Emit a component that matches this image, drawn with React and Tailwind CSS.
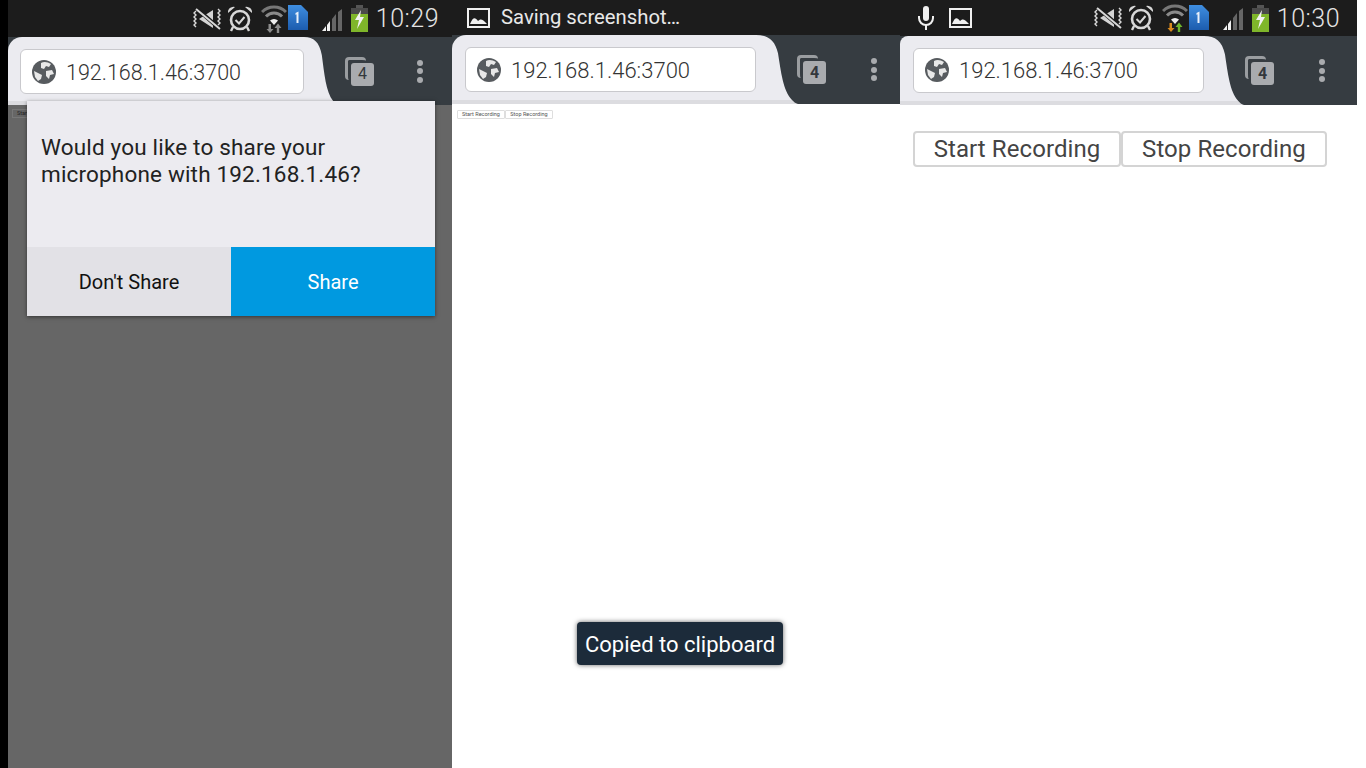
import React from 'react';

const font = { fontFamily: 'Roboto, "Liberation Sans", sans-serif' };

function MuteIcon() {
  return (
    <svg width="29" height="22" viewBox="0 0 29 22" className="shrink-0">
      <path d="M6 11 L20 2 V20 Z" fill="#d4d4d4" />
      <path d="M3 0 L27 21" stroke="#1c1c1c" strokeWidth="4" />
      <path d="M3 1 L27 21" stroke="#d8d8d8" strokeWidth="2" />
      <path d="M3 3 l-2 2 l2 2 l-2 2 l2 2 l-2 2 l2 2 l-2 2 l2 2" stroke="#d8d8d8" strokeWidth="1.4" fill="none" />
      <path d="M25 1 l2 2 l-2 2 l2 2 l-2 2 l2 2 l-2 2 l2 2 l-2 2" stroke="#d8d8d8" strokeWidth="1.4" fill="none" />
    </svg>
  );
}

function AlarmIcon() {
  return (
    <svg width="24" height="26" viewBox="0 0 24 26" className="shrink-0">
      <circle cx="12" cy="14" r="9" fill="none" stroke="#d8d8d8" strokeWidth="2.6" />
      <path d="M0 7 A5.5 5.5 0 0 1 7 1 Z M24 7 A5.5 5.5 0 0 0 17 1 Z" fill="#d8d8d8" />
      <path d="M7.5 14 L11 17.5 L16.5 11" fill="none" stroke="#d8d8d8" strokeWidth="2" />
      <path d="M5 21 L3 25 M19 21 L21 25" stroke="#d8d8d8" strokeWidth="2.4" />
    </svg>
  );
}

function WifiIcon({ down = '#8c8c8c', up = '#8c8c8c' }) {
  return (
    <svg width="26" height="28" viewBox="0 0 26 28" className="shrink-0">
      <path d="M1 7 A17 17 0 0 1 25 7" fill="none" stroke="#777" strokeWidth="3" />
      <path d="M5 11.5 A11 11 0 0 1 21 11.5" fill="none" stroke="#8a8a8a" strokeWidth="3" />
      <path d="M9 15.5 A6 6 0 0 1 17 15.5 L13 20 Z" fill="#ededed" />
      <path d="M9 19 L5.5 23 H8 V28 H10.5 V23 H12.5 Z" fill={down} transform="rotate(180 9 23.5)" />
      <path d="M17 18.5 L13.5 23 H15.8 V28 H18.2 V23 H20.5 Z" fill={up} />
    </svg>
  );
}

function SimIcon() {
  return (
    <svg width="20" height="25" viewBox="0 0 20 25" className="shrink-0">
      <defs>
        <linearGradient id="simFill" x1="0" y1="0" x2="0" y2="1">
          <stop offset="0" stopColor="#3f8ee0" />
          <stop offset="1" stopColor="#1c5cae" />
        </linearGradient>
      </defs>
      <path d="M0 0 H13 L20 7 V25 H0 Z" fill="url(#simFill)" />
      <path d="M7.5 8 L10.5 6.5 V18 H8.5 V9.3 L7.5 10 Z" fill="#e8f0fa" />
    </svg>
  );
}

function SignalIcon() {
  return (
    <svg width="22" height="22" viewBox="0 0 22 22" className="shrink-0">
      <path d="M0 22 L4 17 V22 Z" fill="#f0f0f0" />
      <path d="M5 16 L8 12 V22 H5 Z" fill="#f0f0f0" />
      <path d="M10 10 L14 5 V22 H10 Z" fill="#666" />
      <path d="M16 3 L20 0 V22 H16 Z" fill="#666" />
    </svg>
  );
}

function BatteryIcon() {
  return (
    <svg width="17" height="27" viewBox="0 0 17 27" className="shrink-0">
      <rect x="5" y="0" width="7" height="3" fill="#555" />
      <rect x="0" y="3" width="17" height="24" fill="#7fb62a" />
      <rect x="0" y="3" width="17" height="6" fill="#4a4a4a" />
      <path d="M10 5 L4 15 H8 L6 24 L13 12 H9 Z" fill="#f2f2f2" />
    </svg>
  );
}

function StatusIcons({ time, colored }) {
  return (
    <div className="flex items-center">
      <MuteIcon />
      <div className="ml-[6px]"><AlarmIcon /></div>
      <div className="ml-[9px]">
        {colored ? <WifiIcon down="#d98a1e" up="#6fb52c" /> : <WifiIcon />}
      </div>
      <div className="ml-[1px] mb-[2px]"><SimIcon /></div>
      <div className="ml-[14px] mt-[2px]"><SignalIcon /></div>
      <div className="ml-[7px]"><BatteryIcon /></div>
      <span className="ml-[8px] text-[25px] font-light tracking-[0.5px] text-[#e4e4e4] leading-none">{time}</span>
    </div>
  );
}

function ImageIcon() {
  return (
    <svg width="23" height="20" viewBox="0 0 23 20" className="shrink-0">
      <rect x="1" y="1" width="21" height="18" fill="none" stroke="#f0f0f0" strokeWidth="2" />
      <path d="M3 16 C6 9 8 9 11 13 C13 11 15 10 20 16 Z" fill="#f0f0f0" />
    </svg>
  );
}

function MicIcon() {
  return (
    <svg width="16" height="24" viewBox="0 0 16 24" className="shrink-0">
      <rect x="5" y="0" width="6" height="15" rx="3" fill="#f0f0f0" />
      <path d="M1 10 V12 A7 7 0 0 0 15 12 V10" fill="none" stroke="#f0f0f0" strokeWidth="2" />
      <rect x="7" y="18" width="2" height="6" fill="#f0f0f0" />
    </svg>
  );
}

function GlobeIcon() {
  return (
    <svg width="24" height="24" viewBox="0 0 24 24" className="shrink-0">
      <circle cx="12" cy="12" r="12" fill="#575b5f" />
      <path d="M9 3 C12 1 16 2 19 4 L17 7 L14 6 L12 9 L9 8 Z" fill="#e8e8e8" />
      <path d="M14 11 L20 10 L22 14 L18 15 L17 19 L14 16 Z" fill="#e8e8e8" />
      <path d="M2 11 L6 13 L10 15 L9 19 L6 21 L3 17 Z" fill="#e8e8e8" />
    </svg>
  );
}

function TabsIcon({ bold }) {
  return (
    <div className="relative w-[29px] h-[29px] shrink-0">
      <div className="absolute left-0 top-0 w-[21px] h-[23px] rounded-[4px] border-l-[3px] border-t-[3px] border-[#9a9da0]" />
      <div className={`absolute left-[6px] top-[6px] w-[23px] h-[23px] rounded-[3px] bg-[#a9abae] flex items-center justify-center text-[16px] text-[#33383c] ${bold ? 'font-bold' : ''}`}>
        4
      </div>
    </div>
  );
}

function MenuDots() {
  return (
    <div className="flex flex-col gap-[2.5px] shrink-0">
      <div className="w-[6px] h-[6px] rounded-full bg-[#a9abae]" />
      <div className="w-[6px] h-[6px] rounded-full bg-[#a9abae]" />
      <div className="w-[6px] h-[6px] rounded-full bg-[#a9abae]" />
    </div>
  );
}

function Toolbar({ barPad, barWidth, urlSize, curveWidth, tabGap, dotsGap, rounded, bold }) {
  return (
    <div className="flex h-full bg-[#363c41]">
      <div className={`flex flex-col bg-[#ebebf0] ${rounded}`}>
        <div className={`flex-1 flex items-center ${barPad}`}>
          <div className={`flex items-center h-[45px] ${barWidth} bg-white rounded-[6px] border border-[#c9c9cd] pl-[11px]`}>
            <GlobeIcon />
            <span className={`ml-[10px] pt-[2px] font-light text-[#333] leading-none ${urlSize}`}>192.168.1.46:3700</span>
          </div>
        </div>
        <div className="h-[4px] bg-[#dcdce0]" />
      </div>
      <svg viewBox="0 0 42 68" preserveAspectRatio="none" className={`shrink-0 h-full ${curveWidth}`}>
        <path d="M0 0 C12 0 19 5 22 18 C25 36 27 55 36 64 L0 64 Z" fill="#ebebf0" />
        <path d="M0 64 H36 C38 66 39 67 42 68 H0 Z" fill="#dcdce0" />
      </svg>
      <div className={`flex items-center ${tabGap}`}><TabsIcon bold={bold} /></div>
      <div className={`flex items-center ${dotsGap}`}><MenuDots /></div>
    </div>
  );
}

function RecordButtons() {
  return (
    <div className="flex text-[24px] text-[#444] leading-none">
      <div className="w-[208px] h-[36px] flex items-center justify-center bg-white border-2 border-[#d4d4d4] rounded-[4px] tracking-[0.08px]">Start Recording</div>
      <div className="w-[206px] h-[36px] flex items-center justify-center bg-white border-2 border-[#d4d4d4] rounded-[4px] tracking-[0.08px]">Stop Recording</div>
    </div>
  );
}

function TinyButtons() {
  return (
    <div className="flex text-[5.5px] text-[#555] leading-none">
      <div className="w-[48px] h-[9px] flex items-center justify-center border border-[#dedede] rounded-[1px] overflow-hidden">Start Recording</div>
      <div className="w-[48px] h-[9px] flex items-center justify-center border border-[#dedede] rounded-[1px] overflow-hidden">Stop Recording</div>
    </div>
  );
}

export default function App() {
  return (
    <div className="flex w-[1366px] h-[768px] overflow-hidden bg-white" style={font}>
      {/* left phone: permission prompt */}
      <div className="w-[452px] h-full pl-2 bg-black flex flex-col relative">
        <div className="h-[37px] bg-[#1c1c1c] pr-[13px] flex items-center justify-end">
          <StatusIcons time="10:29" />
        </div>
        <div className="h-[68px]">
          <Toolbar barPad="pl-[12px] pt-[5px]" barWidth="w-[284px]" urlSize="text-[21.5px]" curveWidth="w-[34px]" tabGap="ml-[7px]" dotsGap="ml-[43px]" rounded="rounded-tl-[14px]" />
        </div>
        <div className="flex-1 bg-[#666] pl-[4px] pt-[4px]">
          <div className="flex text-[5.5px] text-[#222] leading-none">
            <div className="w-[48px] h-[9px] flex items-center justify-center border border-[#777]">Start Recording</div>
          </div>
        </div>
        <div className="absolute left-[27px] top-[101px] w-[408px] h-[215px] bg-[#ecebf0] shadow-[0_1px_4px_rgba(0,0,0,0.5)] flex flex-col">
          <div className="flex-1 px-[14px] pt-[33px] text-[22.5px] leading-[27px] tracking-[0.17px] text-[#222]">
            Would you like to share your<br />microphone with 192.168.1.46?
          </div>
          <div className="flex h-[69px] text-[20px]">
            <div className="flex-1 bg-[#e2e1e6] text-[#111] flex items-center justify-center">Don't Share</div>
            <div className="flex-1 bg-[#0099e0] text-white flex items-center justify-center">Share</div>
          </div>
        </div>
      </div>

      {/* middle phone: small page and toast */}
      <div className="w-[448px] h-full flex flex-col relative">
        <div className="h-[35px] bg-[#1c1c1c] pl-[15px] flex items-center">
          <ImageIcon />
          <span className="ml-[11px] text-[20.3px] text-[#e8e8e8] leading-none">Saving screenshot…</span>
        </div>
        <div className="h-[69px]">
          <Toolbar barPad="pl-[13px] pt-[4px]" barWidth="w-[291px]" urlSize="text-[22px]" curveWidth="w-[42px]" tabGap="ml-[-1px]" dotsGap="ml-[45px]" rounded="rounded-tl-[14px]" bold />
        </div>
        <div className="flex-1 bg-white pl-[5px] pt-[6px]">
          <TinyButtons />
        </div>
        <div className="absolute left-[125px] top-[622px] w-[206px] h-[43px] pt-[2px] rounded-[4px] bg-[#1c2b3a] text-white text-[22px] flex items-center justify-center shadow-[0_0_5px_rgba(0,0,0,0.6)]">
          Copied to clipboard
        </div>
      </div>

      {/* right phone: zoomed page */}
      <div className="w-[457px] h-full flex flex-col">
        <div className="h-[36px] bg-[#1c1c1c] pl-[18px] pr-[17px] flex items-center justify-between">
          <div className="flex items-center">
            <MicIcon />
            <div className="ml-[15px]"><ImageIcon /></div>
          </div>
          <StatusIcons time="10:30" colored />
        </div>
        <div className="h-[69px]">
          <Toolbar barPad="pl-[13px] pt-[3px]" barWidth="w-[291px]" urlSize="text-[22px]" curveWidth="w-[40px]" tabGap="ml-[1px]" dotsGap="ml-[45px]" rounded="rounded-tl-[8px]" bold />
        </div>
        <div className="flex-1 bg-white pl-[13px] pt-[26px]">
          <RecordButtons />
        </div>
      </div>
    </div>
  );
}
